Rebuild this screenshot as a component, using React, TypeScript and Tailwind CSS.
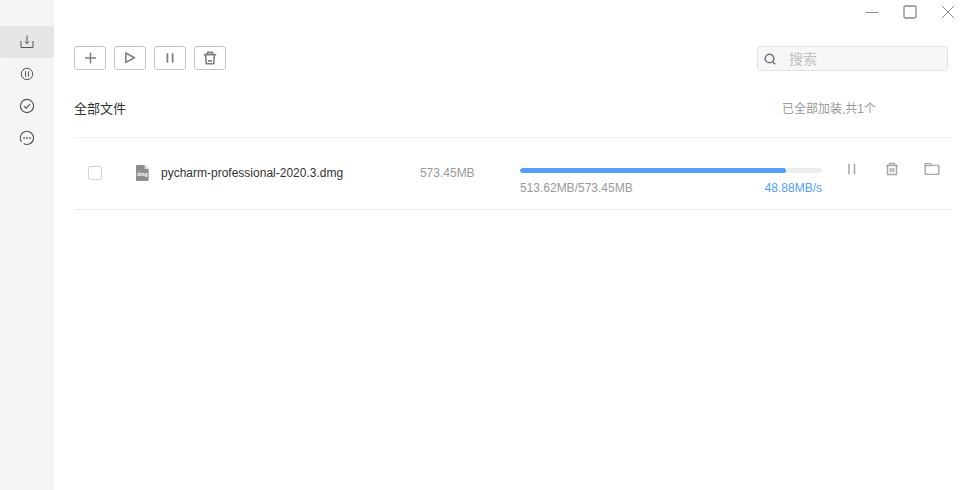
import { useState } from 'react';
import type { ReactNode } from 'react';

type Download = {
  id: number;
  name: string;
  size: string;
  done: string;
  speed: string;
  percent: number;
};

const DOWNLOADS: Download[] = [
  {
    id: 1,
    name: 'pycharm-professional-2020.3.dmg',
    size: '573.45MB',
    done: '513.62MB',
    speed: '48.88MB/s',
    percent: 88,
  },
];

// Shared stroke wrapper, every icon is drawn on a 16px grid
function Icon({ children, width = 1 }: { children: ReactNode; width?: number }) {
  return (
    <svg
      className="size-4 shrink-0"
      viewBox="0 0 16 16"
      fill="none"
      stroke="currentColor"
      strokeWidth={width}
      aria-hidden="true"
    >
      {children}
    </svg>
  );
}

const NAV = [
  {
    id: 'downloading',
    label: '下载中',
    icon: <Icon><path d="M8 1.5v8M5.8 7.5 8 9.7l2.2-2.2M2 7v6.5h12V7" /></Icon>,
  },
  {
    id: 'paused',
    label: '已暂停',
    icon: <Icon><circle cx="8" cy="8" r="5.7" /><path d="M6.6 5.3v5.4M9.4 5.3v5.4" /></Icon>,
  },
  {
    id: 'finished',
    label: '已完成',
    icon: <Icon width={1.2}><circle cx="8" cy="8" r="6.6" /><path d="m5 8.1 2.2 2.1 3.9-4" /></Icon>,
  },
  {
    id: 'more',
    label: '更多',
    icon: (
      <Icon width={1.1}>
        <path d="M2.6 11.8a6.6 6.6 0 1 1 2 1.8" />
        <path d="M4.3 8h1.6M7.2 8h1.6M10.1 8h1.6" strokeWidth="1.5" />
      </Icon>
    ),
  },
];

const TOOLS = [
  { label: '新建', icon: <Icon width={1.5}><path d="M8.5 2.5v11M3 8h11" /></Icon> },
  { label: '开始', icon: <Icon width={1.6}><path d="M3.8 3v9.4l8.7-4.7z" strokeLinejoin="round" /></Icon> },
  { label: '暂停', icon: <Icon width={1.8}><path d="M5.4 3.3v9.4M10.6 3.3v9.4" /></Icon> },
  {
    label: '删除',
    icon: (
      <Icon width={1.6}>
        <path d="M1.8 4.6h12.4M5 4.4l.7-2h4.6l.7 2M3.6 4.8l.7 8.9h7.4l.7-8.9M6 10.9h4" />
      </Icon>
    ),
  },
];

const ROW_ACTIONS = [
  { label: '暂停', icon: <Icon width={1.6}><path d="M5 2.8v10.4M10.5 2.8v10.4" /></Icon> },
  {
    label: '删除',
    icon: (
      <Icon width={1.5}>
        <path d="M2 4.6h12M5.5 4.4V2.6h5v1.8M3.5 4.8v8.6h9V4.8" />
        <path d="M6.2 7v4.2M8 7v4.2M9.8 7v4.2" strokeWidth="1.2" />
      </Icon>
    ),
  },
  {
    label: '打开文件夹',
    icon: (
      <Icon width={1.4}>
        <path d="M1.2 13.4V2.6h5.4l1.2 1.8h7V13.4z M1.2 4.6h6.4" strokeLinejoin="round" />
      </Icon>
    ),
  },
];

function Sidebar() {
  const [active, setActive] = useState('downloading');

  return (
    <nav className="w-[54px] shrink-0 bg-[#f5f5f5] pt-[26px]">
      {NAV.map((item) => (
        <button
          key={item.id}
          aria-label={item.label}
          onClick={() => setActive(item.id)}
          className={`flex h-8 w-full items-center justify-center rounded-xs text-[#555] ${
            active === item.id ? 'bg-[#e6e6e8]' : ''
          }`}
        >
          {item.icon}
        </button>
      ))}
    </nav>
  );
}

function WindowControls() {
  return (
    <div className="flex h-6 justify-end gap-[22px] text-[#8c8c8c]">
      <button aria-label="最小化"><Icon><path d="M2 8.5h12" /></Icon></button>
      <button aria-label="最大化"><Icon width={1.3}><rect x="2" y="2" width="12" height="12" rx="1.5" /></Icon></button>
      <button aria-label="关闭"><Icon><path d="m2 2 12 12M14 2 2 14" /></Icon></button>
    </div>
  );
}

function FileIcon() {
  return (
    <svg className="h-4 w-[13px]" viewBox="0 0 13 16" aria-hidden="true">
      <path d="M1.2 0H8.6L12.6 4V14.8a1.2 1.2 0 0 1-1.2 1.2H1.2A1.2 1.2 0 0 1 0 14.8V1.2A1.2 1.2 0 0 1 1.2 0z" fill="#8e8e8e" />
      <path d="M8.6 0v4h4z" fill="#dcdcdc" />
      <text x="6.3" y="11" textAnchor="middle" fontSize="5" fontWeight="700" fill="#fff">dmg</text>
    </svg>
  );
}

function DownloadRow({ item }: { item: Download }) {
  return (
    <li className="grid h-18 grid-cols-[62px_25px_minmax(0,6fr)_100px_minmax(0,7fr)_130px] items-center border-b border-[#e8e8e8] pb-0.5 text-xs text-[#999]">
      <input
        type="checkbox"
        aria-label={item.name}
        className="ml-3.5 size-3.5 appearance-none rounded-xs border border-[#d4d4d4] bg-white checked:bg-[#549df8]"
      />
      <FileIcon />
      <span className="truncate text-[#333]">{item.name}</span>
      <span>{item.size}</span>

      <div className="pt-[19px]">
        <div className="h-[5px] overflow-hidden rounded-full bg-[#ededf0]">
          <div className="h-full rounded-full bg-[#549df8]" style={{ width: `${item.percent}%` }} />
        </div>
        <div className="mt-[7px] flex justify-between">
          <span>{item.done}/{item.size}</span>
          <span className="text-[#549df8]">{item.speed}</span>
        </div>
      </div>

      <div className="flex justify-end pb-2 text-[#a8a8a8]">
        {ROW_ACTIONS.map((action) => (
          <button key={action.label} aria-label={action.label} className="flex w-10 justify-center">
            {action.icon}
          </button>
        ))}
      </div>
    </li>
  );
}

export default function App() {
  return (
    <div className="flex min-h-screen bg-white font-['Liberation_Sans','Noto_Sans_CJK_SC',sans-serif]">
      <Sidebar />

      <main className="min-w-0 flex-1 pr-[22px] pl-5">
        <WindowControls />

        <div className="mt-[22px] mr-1">
          <div className="mr-1 flex items-start justify-between">
            <div className="flex gap-2">
              {TOOLS.map((tool) => (
                <button
                  key={tool.label}
                  aria-label={tool.label}
                  className="flex h-6 w-8 items-center justify-center rounded-[3px] border border-[#c4c4c4] text-[#808080]"
                >
                  {tool.icon}
                </button>
              ))}
            </div>

            <label className="flex h-[25px] w-[191px] items-center gap-[11px] rounded-[3px] border border-[#e2e3e6] bg-[#f6f7f9] px-1 text-[#777]">
              <Icon width={1.6}><circle cx="7.5" cy="7.5" r="4.3" /><path d="m10.7 10.7 2.5 2.5" /></Icon>
              <input
                type="text"
                placeholder="搜索"
                aria-label="搜索"
                className="min-w-0 flex-1 bg-transparent text-sm outline-none placeholder:text-[#c0c0c0]"
              />
            </label>
          </div>

          <div className="flex h-[67px] items-center justify-between border-b border-[#f2f2f2] pt-2.5">
            <h1 className="text-[13px] text-[#333]">全部文件</h1>
            <p className="mr-[76px] text-xs text-[#999]">已全部加装,共{DOWNLOADS.length}个</p>
          </div>

          <ul>
            {DOWNLOADS.map((item) => (
              <DownloadRow key={item.id} item={item} />
            ))}
          </ul>
        </div>
      </main>
    </div>
  );
}
